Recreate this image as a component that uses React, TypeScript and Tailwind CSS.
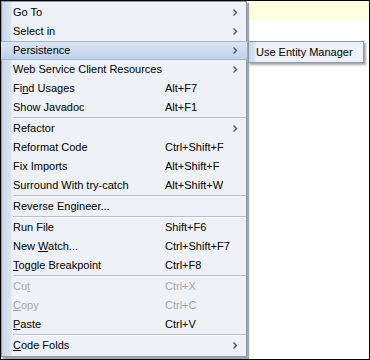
import React from "react";

type Item =
  | { sep: true }
  | {
      sep?: false;
      label: React.ReactNode;
      key?: string;
      sub?: boolean;
      hot?: boolean;
      off?: boolean;
    };

const u = (s: string) => <span className="underline underline-offset-[1px]">{s}</span>;

const items: Item[] = [
  { label: "Go To", sub: true },
  { label: "Select in", sub: true },
  { label: "Persistence", sub: true, hot: true },
  { label: "Web Service Client Resources", sub: true },
  { label: <>Fi{u("n")}d Usages</>, key: "Alt+F7" },
  { label: "Show Javadoc", key: "Alt+F1" },
  { sep: true },
  { label: "Refactor", sub: true },
  { label: "Reformat Code", key: "Ctrl+Shift+F" },
  { label: "Fix Imports", key: "Alt+Shift+F" },
  { label: "Surround With try-catch", key: "Alt+Shift+W" },
  { sep: true },
  { label: "Reverse Engineer..." },
  { sep: true },
  { label: "Run File", key: "Shift+F6" },
  { label: <>New {u("W")}atch...</>, key: "Ctrl+Shift+F7" },
  { label: <>{u("T")}oggle Breakpoint</>, key: "Ctrl+F8" },
  { sep: true },
  { label: <>Cu{u("t")}</>, key: "Ctrl+X", off: true },
  { label: <>{u("C")}opy</>, key: "Ctrl+C", off: true },
  { label: <>{u("P")}aste</>, key: "Ctrl+V" },
  { sep: true },
  { label: <>{u("C")}ode Folds</>, sub: true },
];

const Arrow = () => (
  <svg width="5" height="7" viewBox="0 0 5 7" className="shrink-0">
    <path d="M0.5 0.5 L3.5 3.5 L0.5 6.5" stroke="#4a5566" strokeWidth="1.4" fill="none" />
  </svg>
);

const App = () => {
  return (
    <div
      className="relative w-[370px] h-[360px] border border-black bg-white overflow-hidden text-[11px] text-black"
      style={{ fontFamily: '"Liberation Sans", Arial, sans-serif' }}
    >
      <div className="h-[19px] bg-[#ffffe0]"></div>

      <div className="absolute left-0 top-0 w-[246px] shadow-[2px_2px_1px_rgba(0,0,0,0.35)]">
        <div className="flex flex-col border border-[#8c97a6] bg-[#eef1f7] pt-[1px] pb-[1px] bg-[linear-gradient(to_right,#c6d6e9_0px,#dbe5f1_9px,#eef1f7_10px)]">
          {items.map((it, i) =>
            it.sep ? (
              <div key={i} className="ml-[11px] h-[2px] flex flex-col">
                <div className="h-px bg-[#b6bfcc]"></div>
                <div className="h-px bg-white"></div>
              </div>
            ) : (
              <div
                key={i}
                className={`h-[19px] flex items-center pl-[11px] pr-[8px] ${
                  it.hot
                    ? "bg-[linear-gradient(to_bottom,#dae6f3,#bed2e8)] border-y border-[#9fb6d0] -mx-px pl-[12px] pr-[9px]"
                    : ""
                } ${it.off ? "text-[#a5a8ad]" : ""}`}
              >
                <span className="w-[152px] whitespace-nowrap">{it.label}</span>
                <span className="flex-1 whitespace-nowrap">{it.key}</span>
                {it.sub && <Arrow />}
              </div>
            )
          )}
        </div>
      </div>

      <div className="absolute left-[247px] top-[40px] w-[116px] shadow-[2px_2px_2px_rgba(0,0,0,0.35)]">
        <div className="h-[22px] flex items-center border border-[#8c97a6] pl-[7px] bg-[linear-gradient(to_right,#c6d6e9_0px,#dbe5f1_6px,#eef1f7_7px)]">
          Use Entity Manager
        </div>
      </div>
    </div>
  );
};

export default App;
